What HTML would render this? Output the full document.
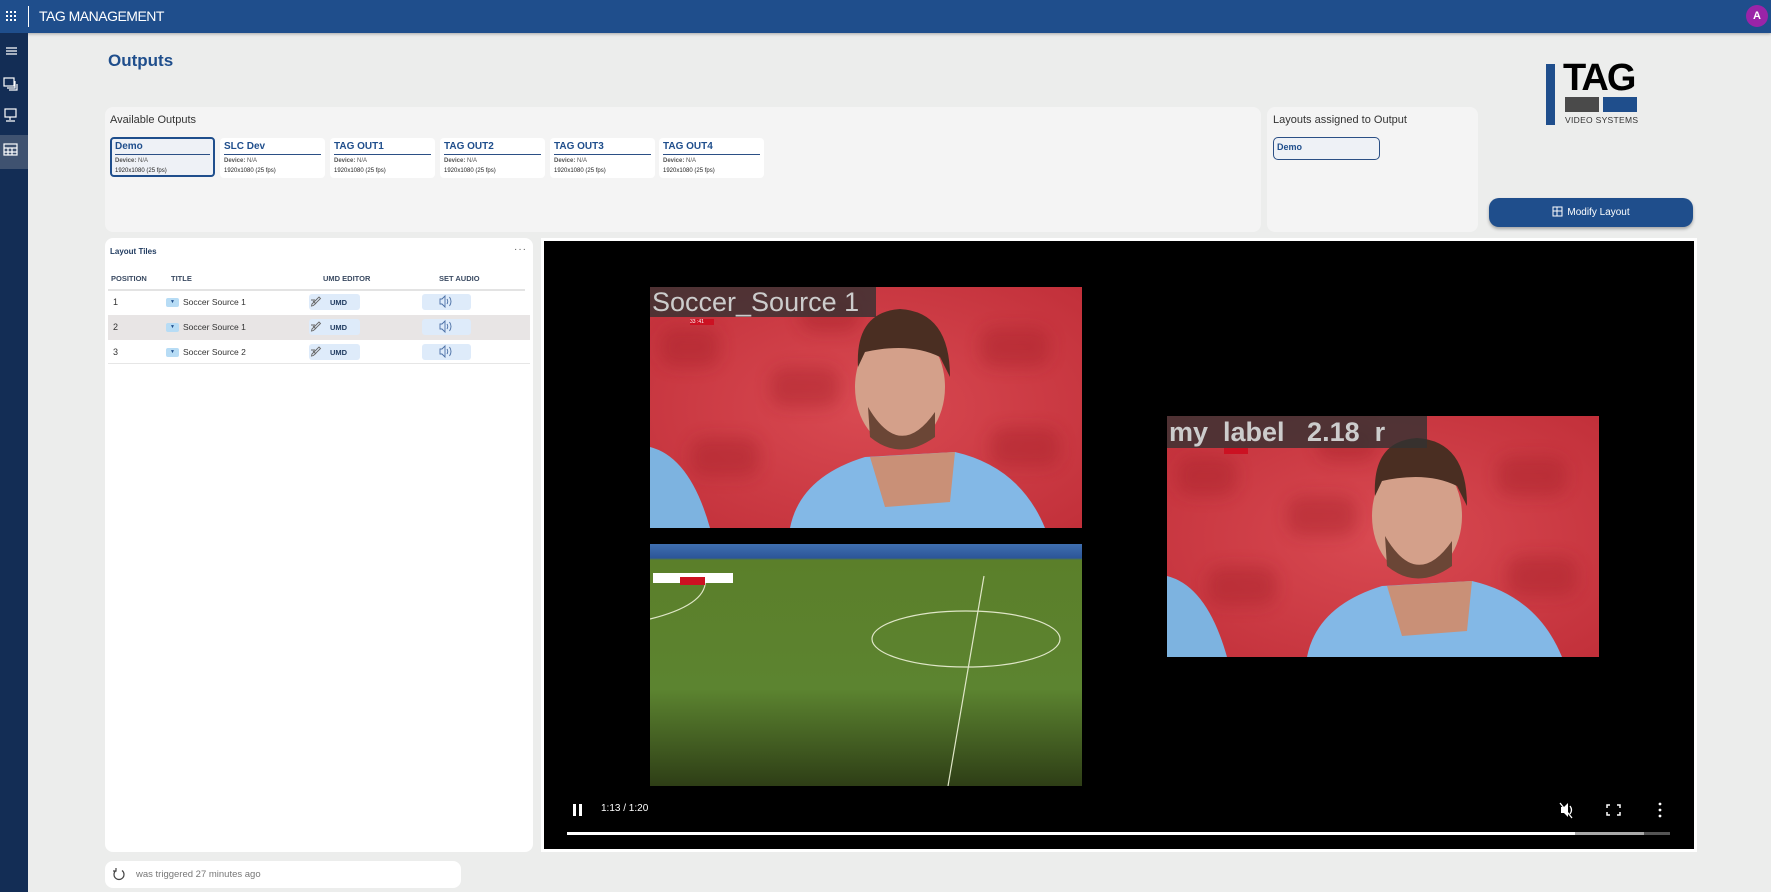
<!DOCTYPE html>
<html><head><meta charset="utf-8"><style>
*{box-sizing:border-box;margin:0;padding:0}
body{width:1771px;height:892px;overflow:hidden;background:#ecedec;font-family:"Liberation Sans",sans-serif;position:relative}
.abs{position:absolute}
.hdr{left:0;top:0;width:1771px;height:33px;background:#1f4e8c;box-shadow:0 1px 3px rgba(0,0,0,.3)}
.side{left:0;top:33px;width:28px;height:859px;background:#132d55}
.panel{background:#f4f4f4;border-radius:8px}
.card{background:#fff;border-radius:4px;width:105px;height:40px;padding:3px 4px}
.card b{display:block;color:#1f4e8c;font-size:10px;border-bottom:1.5px solid #2b4f85;padding-bottom:2px}
.card i{display:block;font-style:normal;font-size:6px;color:#555;margin-top:3px}
.card s{display:block;text-decoration:none;font-size:6px;color:#222;margin-top:4px}
.th{font-size:7.5px;font-weight:bold;color:#3a4a62}
.pill{background:#deebfa;border-radius:3px;height:16px}
</style></head><body>
<div class="abs hdr"></div>
<div class="abs" style="left:6px;top:11px;width:11px;height:11px;display:grid;grid-template-columns:repeat(3,3px);gap:1px">
<i style="background:#fff;width:2px;height:2px"></i><i style="background:#fff;width:2px;height:2px"></i><i style="background:#fff;width:2px;height:2px"></i><i style="background:#fff;width:2px;height:2px"></i><i style="background:#fff;width:2px;height:2px"></i><i style="background:#fff;width:2px;height:2px"></i><i style="background:#fff;width:2px;height:2px"></i><i style="background:#fff;width:2px;height:2px"></i><i style="background:#fff;width:2px;height:2px"></i></div>
<div class="abs" style="left:28px;top:6px;width:1px;height:21px;background:#fff"></div>
<div class="abs" style="left:39px;top:8px;color:#fff;font-size:14px;letter-spacing:-.5px">TAG MANAGEMENT</div>
<div class="abs" style="left:1746px;top:5px;width:22px;height:22px;border-radius:50%;background:#9a24a8;color:#fff;font-size:11px;font-weight:bold;text-align:center;line-height:22px">A</div>

<div class="abs side"></div>
<div class="abs" style="left:0;top:135px;width:28px;height:34px;background:#3f5270"></div>
<svg class="abs" style="left:0;top:40px" width="28" height="130" fill="none" stroke="#fff" stroke-width="1.2">
<path d="M6 8h11M6 11h11M6 14h11"/>
<rect x="4" y="38" width="10" height="8"/><path d="M15 41v7H7M17 44v6H9"/>
<rect x="5" y="69" width="11" height="8"/><path d="M10 77v3M6 81h9"/>
<rect x="4" y="104" width="13" height="11"/><path d="M4 108h13M4 112h13M8 108v7M12 108v7"/>
</svg>

<div class="abs" style="left:108px;top:51px;font-size:17px;font-weight:bold;color:#1f4e8c">Outputs</div>

<div class="abs panel" style="left:105px;top:107px;width:1156px;height:125px"></div>
<div class="abs" style="left:110px;top:114px;font-size:11px;color:#333">Available Outputs</div>
<div class="abs card" style="left:110px;top:137px;background:#eef1f6;border:2px solid #1f4e8c;padding:2px 3px"><b>Demo</b><i><span style="font-weight:bold">Device:</span> N/A</i><s>1920x1080 (25 fps)</s></div>
<div class="abs card" style="left:220px;top:138px"><b>SLC Dev</b><i><span style="font-weight:bold">Device:</span> N/A</i><s>1920x1080 (25 fps)</s></div>
<div class="abs card" style="left:330px;top:138px"><b>TAG OUT1</b><i><span style="font-weight:bold">Device:</span> N/A</i><s>1920x1080 (25 fps)</s></div>
<div class="abs card" style="left:440px;top:138px"><b>TAG OUT2</b><i><span style="font-weight:bold">Device:</span> N/A</i><s>1920x1080 (25 fps)</s></div>
<div class="abs card" style="left:550px;top:138px"><b>TAG OUT3</b><i><span style="font-weight:bold">Device:</span> N/A</i><s>1920x1080 (25 fps)</s></div>
<div class="abs card" style="left:659px;top:138px"><b>TAG OUT4</b><i><span style="font-weight:bold">Device:</span> N/A</i><s>1920x1080 (25 fps)</s></div>

<div class="abs panel" style="left:1267px;top:107px;width:211px;height:125px"></div>
<div class="abs" style="left:1273px;top:114px;font-size:11px;color:#333">Layouts assigned to Output</div>
<div class="abs" style="left:1273px;top:137px;width:107px;height:23px;border:1.5px solid #2b4f85;border-radius:5px;background:#eef1f6;font-size:9px;font-weight:bold;color:#1f4e8c;padding:4px 3px">Demo</div>

<div class="abs" style="left:1546px;top:64px;width:9px;height:61px;background:#1f4e8c"></div>
<div class="abs" style="left:1563px;top:56px;font-size:38px;font-weight:bold;color:#000;letter-spacing:-2px;line-height:44px">TAG</div>
<div class="abs" style="left:1565px;top:97px;width:34px;height:15px;background:#4a4a4a"></div>
<div class="abs" style="left:1603px;top:97px;width:34px;height:15px;background:#1f4e8c"></div>
<div class="abs" style="left:1565px;top:115px;font-size:8.5px;color:#333;letter-spacing:.3px">VIDEO SYSTEMS</div>

<div class="abs" style="left:1489px;top:198px;width:204px;height:29px;border-radius:10px;background:#1f4e8c;box-shadow:0 2px 3px rgba(0,0,0,.3);color:#fff;font-size:10px;text-align:center;line-height:29px">
<svg width="11" height="11" style="vertical-align:-2px;margin-right:4px" fill="none" stroke="#fff" stroke-width="1"><rect x="1" y="1" width="9" height="9"/><path d="M1 5h9M5 1v9"/></svg>Modify Layout</div>

<div class="abs" style="left:105px;top:238px;width:428px;height:614px;background:#fff;border-radius:8px"></div>
<div class="abs" style="left:110px;top:247px;font-size:8px;font-weight:bold;color:#1f3a5f">Layout Tiles</div>
<div class="abs" style="left:514px;top:244px;font-size:10px;color:#555;letter-spacing:1px">···</div>
<div class="abs th" style="left:111px;top:274px">POSITION</div>
<div class="abs th" style="left:171px;top:274px">TITLE</div>
<div class="abs th" style="left:323px;top:274px">UMD EDITOR</div>
<div class="abs th" style="left:439px;top:274px">SET AUDIO</div>
<div class="abs" style="left:108px;top:289px;width:417px;height:2px;background:#e3e3e3"></div>
<div class="abs" style="left:108px;top:315px;width:422px;height:25px;background:#e8e5e5"></div>
<div class="abs" style="left:108px;top:363px;width:422px;height:1px;background:#e6e6e6"></div>

<div class="abs" style="left:113px;top:297px;font-size:9px;color:#333">1</div>
<div class="abs" style="left:113px;top:322px;font-size:9px;color:#333">2</div>
<div class="abs" style="left:113px;top:347px;font-size:9px;color:#333">3</div>
<div class="abs" style="left:166px;top:298px;width:13px;height:9px;border-radius:2px;background:#b7dcf5;font-size:5px;text-align:center;line-height:9px;color:#1f4e8c">▼</div>
<div class="abs" style="left:166px;top:323px;width:13px;height:9px;border-radius:2px;background:#b7dcf5;font-size:5px;text-align:center;line-height:9px;color:#1f4e8c">▼</div>
<div class="abs" style="left:166px;top:348px;width:13px;height:9px;border-radius:2px;background:#b7dcf5;font-size:5px;text-align:center;line-height:9px;color:#1f4e8c">▼</div>
<div class="abs" style="left:183px;top:297px;font-size:8.5px;color:#333">Soccer Source 1</div>
<div class="abs" style="left:183px;top:322px;font-size:8.5px;color:#333">Soccer Source 1</div>
<div class="abs" style="left:183px;top:347px;font-size:8.5px;color:#333">Soccer Source 2</div>

<div class="abs pill" style="left:309px;top:294px;width:51px"></div>
<div class="abs pill" style="left:309px;top:319px;width:51px"></div>
<div class="abs pill" style="left:309px;top:344px;width:51px"></div>
<div class="abs pill" style="left:422px;top:294px;width:49px"></div>
<div class="abs pill" style="left:422px;top:319px;width:49px"></div>
<div class="abs pill" style="left:422px;top:344px;width:49px"></div>
<div class="abs" style="left:330px;top:298px;font-size:7.5px;font-weight:bold;color:#1f3a5f">UMD</div>
<div class="abs" style="left:330px;top:323px;font-size:7.5px;font-weight:bold;color:#1f3a5f">UMD</div>
<div class="abs" style="left:330px;top:348px;font-size:7.5px;font-weight:bold;color:#1f3a5f">UMD</div>
<svg class="abs" style="left:300px;top:290px" width="180" height="80" fill="none" stroke="#666" stroke-width=".9">
<g id="ic"><path d="M12 14l7-7 1.5 1.5-7 7-2 .5zM13 11l3 3M11 10h4"/>
<path d="M140 9h2l3-3v11l-3-3h-2z" stroke="#4a6fa5"/><path d="M147 9q1.5 2.5 0 5M149.5 7q3 4.5 0 9" stroke="#4a6fa5"/></g>
<use href="#ic" y="25"/><use href="#ic" y="50"/>
</svg>

<div class="abs" style="left:105px;top:861px;width:356px;height:27px;background:#fff;border-radius:8px"></div>
<svg class="abs" style="left:112px;top:867px" width="14" height="14" fill="none" stroke="#444" stroke-width="1.2"><path d="M10 3.5A5 5 0 1 1 4 3.5M4 1v3H1"/></svg>
<div class="abs" style="left:136px;top:869px;font-size:9.5px;color:#777">was triggered 27 minutes ago</div>

<div class="abs" style="left:544px;top:241px;width:1150px;height:608px;background:#000;box-shadow:0 0 0 3px #fff"></div>
<svg width="0" height="0" style="position:absolute"><defs>
<radialGradient id="rg" cx="50%" cy="50%" r="70%"><stop offset="0" stop-color="#d94a52"/><stop offset="1" stop-color="#c2303a"/></radialGradient>
<filter id="bl"><feGaussianBlur stdDeviation="8"/></filter>
<symbol id="pl" viewBox="0 0 432 241">
<rect width="432" height="241" fill="url(#rg)"/>
<g fill="#a9222c" opacity=".45" filter="url(#bl)"><rect x="10" y="40" width="60" height="40" rx="15"/><rect x="120" y="80" width="70" height="40" rx="15"/><rect x="330" y="40" width="70" height="40" rx="15"/><rect x="340" y="140" width="70" height="40" rx="15"/><rect x="40" y="150" width="70" height="40" rx="15"/><rect x="150" y="10" width="60" height="35" rx="15"/></g>
<path d="M0 160 Q40 170 60 241 H0Z" fill="#7db3e0"/>
<path d="M140 241 Q150 190 215 170 L305 165 Q370 180 395 241Z" fill="#83b8e6"/>
<path d="M220 170 L235 220 L300 215 L305 165Z" fill="#c99077"/>
<ellipse cx="250" cy="100" rx="45" ry="60" fill="#d4a08a"/>
<path d="M208 80 Q205 25 250 22 Q300 25 300 90 L290 70 Q260 55 215 65Z" fill="#4a2e22"/>
<path d="M218 120 Q250 175 285 125 L285 150 Q250 175 220 150Z" fill="#6b4636"/>
</symbol></defs></svg>

<svg class="abs" style="left:650px;top:287px" width="432" height="241"><use href="#pl"/></svg>
<div class="abs" style="left:650px;top:287px;width:226px;height:30px;background:rgba(50,50,50,.8);color:#ccc;font-size:27px;line-height:30px;padding-left:2px">Soccer_Source 1</div>
<div class="abs" style="left:690px;top:319px;width:24px;height:6px;background:#c12;font-size:5px;color:#fff">33 :41</div>

<div class="abs" style="left:650px;top:544px;width:432px;height:242px;background:linear-gradient(#3f6fb0 0,#2c5598 14px,#5b7f2a 16px,#5c8430 60%,#2e3e16 100%)"></div>
<svg class="abs" style="left:650px;top:544px" width="432" height="242" fill="none" stroke="#dfe6c7" stroke-width="1.2"><path d="M334 32 L298 242"/><ellipse cx="316" cy="95" rx="94" ry="28"/><path d="M0 75 Q60 60 55 33"/><rect x="3" y="29" width="80" height="10" fill="#fff" stroke="none"/><rect x="30" y="33" width="25" height="8" fill="#c12" stroke="none"/></svg>

<svg class="abs" style="left:1167px;top:416px" width="432" height="241"><use href="#pl"/></svg>
<div class="abs" style="left:1167px;top:416px;width:260px;height:32px;background:rgba(50,50,50,.8);color:#ccc;font-size:27px;font-weight:bold;line-height:32px;padding-left:2px;white-space:pre;overflow:hidden">my  label   2.18  r</div>
<div class="abs" style="left:1224px;top:448px;width:24px;height:6px;background:#c12"></div>

<div class="abs" style="left:573px;top:804px;width:3px;height:12px;background:#fff"></div>
<div class="abs" style="left:579px;top:804px;width:3px;height:12px;background:#fff"></div>
<div class="abs" style="left:601px;top:803px;color:#fff;font-size:10px">1:13 / 1:20</div>
<svg class="abs" style="left:1558px;top:801px" width="120" height="18" fill="#fff" stroke="#fff"><path d="M3 6h3l4-4v14l-4-4H3Z" stroke="none"/><path d="M12 5q3 4 0 8M2 2l12 15" stroke-width="1.3" fill="none"/><path d="M52 4h-3v3M59 4h3v3M52 14h-3v-3M59 14h3v-3" fill="none" stroke-width="1.5"/><circle cx="102" cy="3" r="1.4" stroke="none"/><circle cx="102" cy="9" r="1.4" stroke="none"/><circle cx="102" cy="15" r="1.4" stroke="none"/></svg>
<div class="abs" style="left:567px;top:832px;width:1103px;height:3px;background:#555"></div>
<div class="abs" style="left:567px;top:832px;width:1077px;height:3px;background:#aaa"></div>
<div class="abs" style="left:567px;top:832px;width:1008px;height:3px;background:#fff"></div>
</body></html>
